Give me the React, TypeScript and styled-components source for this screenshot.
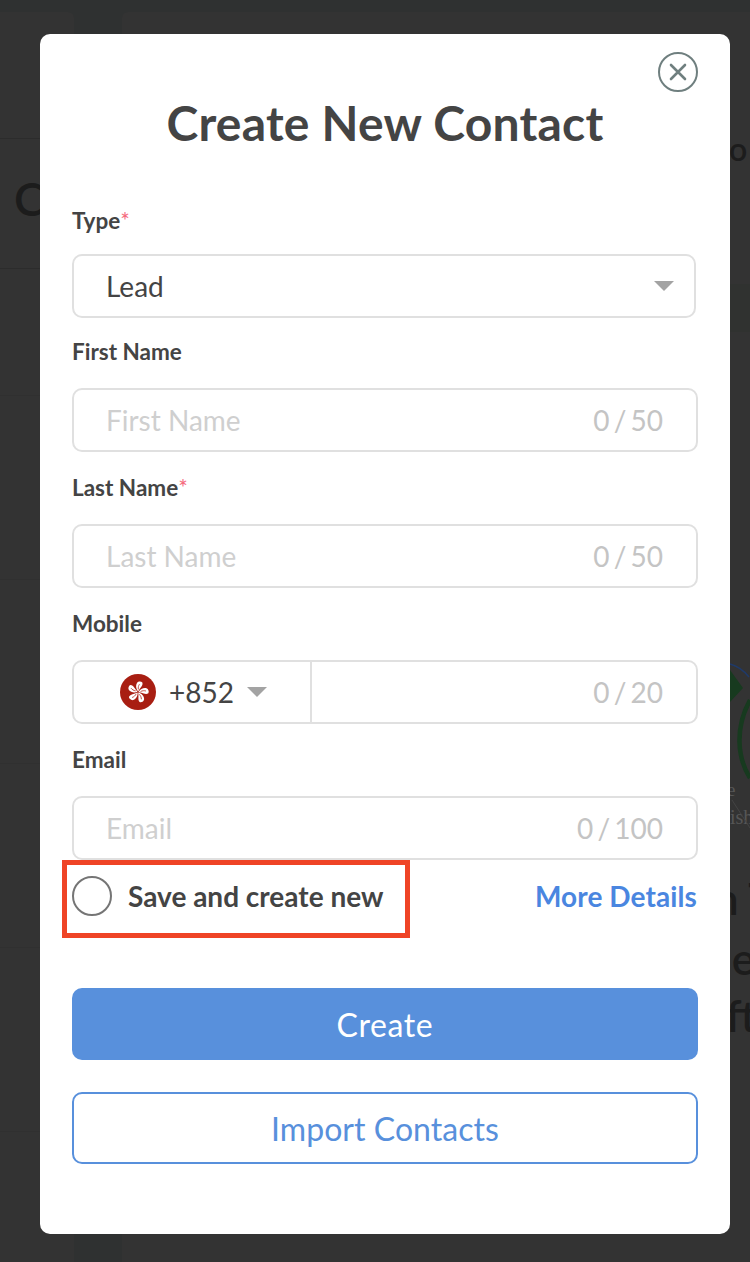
import React from "react";
import styled, { createGlobalStyle } from "styled-components";

const Global = createGlobalStyle`
  html, body { margin: 0; padding: 0; background: #333; }
  body { font-family: Lato, "Liberation Sans", sans-serif; color: #444; }
  * { box-sizing: border-box; }
`;

const Page = styled.div`
  position: relative;
  width: 750px;
  height: 1262px;
  overflow: hidden;
  background: #2f3131;
`;

const Behind = styled.div`
  position: absolute;
  inset: 12px 0 0 0;
  display: flex;
  gap: 48px;
`;

const Side = styled.div`
  width: 74px;
  background: #333333;
  border-radius: 0 6px 0 0;
`;

const Main = styled.div`
  flex: 1;
  background: #333333;
  border-radius: 6px 0 0 0;
`;

const Rule = styled.div<{ $top: number; $strong?: boolean }>`
  position: absolute;
  left: 0;
  width: 74px;
  top: ${(p) => p.$top}px;
  height: 1px;
  background: ${(p) => (p.$strong ? "#2c2c2c" : "#303030")};
`;

const Band = styled.div`
  position: absolute;
  left: 122px;
  right: 0;
  top: 284px;
  height: 48px;
  background: #303230;
`;

const Ghost = styled.span<{ $x: number; $y: number; $size: number; $serif?: boolean }>`
  position: absolute;
  left: ${(p) => p.$x}px;
  top: ${(p) => p.$y}px;
  font-size: ${(p) => p.$size}px;
  line-height: 1;
  color: ${(p) => (p.$serif ? "#565656" : "#1c1c1c")};
  font-family: ${(p) => (p.$serif ? '"Liberation Serif", serif' : "Lato, sans-serif")};
  font-weight: ${(p) => (p.$serif ? 400 : 600)};
  white-space: nowrap;
`;

const ChartArt = styled.svg`
  position: absolute;
  left: 730px;
  top: 650px;
`;

const Modal = styled.div`
  position: absolute;
  left: 40px;
  top: 34px;
  width: 690px;
  height: 1200px;
  background: #fff;
  border-radius: 10px;
  padding: 0 32px;
  display: flex;
  flex-direction: column;
`;

const Close = styled.button`
  position: absolute;
  top: 18px;
  right: 32px;
  width: 40px;
  height: 40px;
  padding: 0;
  border: 0;
  background: transparent;
  display: block;
`;

const Title = styled.h1`
  margin: 59px 0 0;
  height: 60px;
  line-height: 60px;
  font-size: 48px;
  font-weight: 700;
  letter-spacing: 0.22px;
  text-align: center;
  color: #444;
`;

const Form = styled.div`
  margin-top: 29px;
  display: flex;
  flex-direction: column;
`;

const Field = styled.div`
  display: flex;
  flex-direction: column;
`;

const Label = styled.label<{ $first?: boolean }>`
  height: 34px;
  margin: ${(p) => (p.$first ? "22px 0 16px" : "19px 0")};
  line-height: 34px;
  font-size: 22.5px;
  font-weight: 700;
  color: #444;
`;

const Star = styled.span`
  color: #f56c7e;
  font-weight: 400;
`;

const Box = styled.div<{ $select?: boolean }>`
  width: ${(p) => (p.$select ? "624px" : "626px")};
  height: 64px;
  margin-bottom: ${(p) => (p.$select ? "-2px" : "0")};
  border: 2px solid #e0e0e0;
  border-radius: 10px;
  display: flex;
  align-items: center;
  font-size: 28px;
  padding: 0 ${(p) => (p.$select ? "20px" : "33px")} 0 32px;
`;

const Value = styled.span`
  flex: 1;
  color: #444;
`;

const Placeholder = styled.span`
  flex: 1;
  color: #cfcfcf;
`;

const Counter = styled.span`
  color: #c4c4c4;
  word-spacing: -3px;
`;

const Caret = styled.span`
  width: 0;
  height: 0;
  border-left: 10px solid transparent;
  border-right: 10px solid transparent;
  border-top: 10px solid #a3a3a3;
`;

const PhoneBox = styled.div`
  width: 626px;
  height: 64px;
  border: 2px solid #e0e0e0;
  border-radius: 10px;
  display: flex;
  font-size: 28px;
`;

const Country = styled.div`
  width: 238px;
  border-right: 2px solid #e0e0e0;
  display: flex;
  align-items: center;
  padding-left: 46px;
  gap: 13px;
`;

const Dial = styled.span`
  color: #444;
`;

const PhoneNumber = styled.div`
  flex: 1;
  display: flex;
  align-items: center;
  justify-content: flex-end;
  padding-right: 33px;
`;

const Options = styled.div`
  position: relative;
  height: 40px;
  margin-top: 16px;
  display: flex;
  align-items: center;
  justify-content: space-between;
`;

const Check = styled.label`
  display: flex;
  align-items: center;
  gap: 16px;
  font-size: 28px;
  font-weight: 700;
  color: #444;
`;

const Radio = styled.span`
  width: 40px;
  height: 40px;
  border-radius: 50%;
  border: 2px solid #757575;
`;

const Highlight = styled.div`
  position: absolute;
  left: -10px;
  top: -16px;
  width: 348px;
  height: 78px;
  border: 5px solid #ef4426;
  pointer-events: none;
`;

const Details = styled.a`
  font-size: 28px;
  font-weight: 700;
  letter-spacing: 0.1px;
  margin-right: 1px;
  color: #4a86e0;
`;

const Primary = styled.button`
  margin-top: 72px;
  width: 626px;
  height: 72px;
  border: 0;
  border-radius: 10px;
  background: #5890dc;
  color: #fff;
  font: 400 32px Lato, sans-serif;
  letter-spacing: 0.6px;
`;

const Secondary = styled.button`
  margin-top: 32px;
  width: 626px;
  height: 72px;
  border: 2px solid #5890dc;
  border-radius: 10px;
  background: #fff;
  color: #5890dc;
  font: 400 32px Lato, sans-serif;
  letter-spacing: 0.05px;
`;

const HongKongFlag = () => (
  <svg width="36" height="36" viewBox="0 0 36 36">
    <circle cx="18" cy="18" r="18" fill="#a81e12" />
    {[0, 72, 144, 216, 288].map((a) => (
      <g key={a} transform={`rotate(${a + 8} 18 18)`}>
        <path
          d="M18 17.4 C15.4 15.2 14.6 11.6 15.8 9 C16.8 7.2 19.6 6.8 21 8 C21.8 9.8 21.2 11.2 20.4 12.6 C19.6 14 18.8 15.6 18 17.4 Z"
          fill="#fff"
        />
        <path d="M18 15.4 C17.4 13.4 17.6 11.6 18.4 10" stroke="#b8362b" strokeWidth="0.8" fill="none" />
      </g>
    ))}
  </svg>
);

const TextField = ({
  label,
  required,
  placeholder,
  count,
}: {
  label: string;
  required?: boolean;
  placeholder: string;
  count: string;
}) => (
  <Field>
    <Label>
      {label}
      {required && <Star>*</Star>}
    </Label>
    <Box>
      <Placeholder>{placeholder}</Placeholder>
      <Counter>{count}</Counter>
    </Box>
  </Field>
);

export default function App() {
  return (
    <Page>
      <Global />
      <Behind>
        <Side />
        <Main />
      </Behind>
      <Band />
      <Rule $top={138} $strong />
      <Rule $top={268} $strong />
      <Rule $top={395} />
      <Rule $top={579} />
      <Rule $top={763} />
      <Rule $top={947} />
      <Rule $top={1131} />
      <Ghost $x={14} $y={176} $size={46}>C</Ghost>
      <Ghost $x={729} $y={133} $size={32}>o</Ghost>
      <Ghost $x={727} $y={780} $size={19} $serif>e</Ghost>
      <Ghost $x={730} $y={807} $size={20} $serif>ish</Ghost>
      <Ghost $x={714} $y={876} $size={44}>n T</Ghost>
      <Ghost $x={707} $y={936} $size={44}>ue</Ghost>
      <Ghost $x={726} $y={993} $size={44}>ft</Ghost>
      <ChartArt width="20" height="190" viewBox="0 0 20 190">
        <path d="M0 20 L13 38 L0 52 Z" fill="#173a1f" />
        <path d="M0 14 Q11 17 19 27" stroke="#1f3a6a" strokeWidth="1.5" fill="none" />
        <path d="M20 50 Q9 70 9.5 92 Q10 112 20 128" stroke="#173a1f" strokeWidth="4.5" fill="none" />
        <path d="M2 150 L20 178" stroke="#444" strokeWidth="1" fill="none" />
      </ChartArt>
      <Modal>
        <Close aria-label="Close">
          <svg width="40" height="40" viewBox="0 0 40 40">
            <circle cx="20" cy="20" r="19" fill="none" stroke="#6f7f7f" strokeWidth="2" />
            <path d="M13 13 L27 27 M27 13 L13 27" stroke="#6f7f7f" strokeWidth="2.6" strokeLinecap="round" />
          </svg>
        </Close>
        <Title>Create New Contact</Title>
        <Form>
          <Field>
            <Label $first>
              Type<Star>*</Star>
            </Label>
            <Box $select>
              <Value>Lead</Value>
              <Caret />
            </Box>
          </Field>
          <TextField label="First Name" placeholder="First Name" count="0 / 50" />
          <TextField label="Last Name" required placeholder="Last Name" count="0 / 50" />
          <Field>
            <Label>Mobile</Label>
            <PhoneBox>
              <Country>
                <HongKongFlag />
                <Dial>+852</Dial>
                <Caret />
              </Country>
              <PhoneNumber>
                <Counter>0 / 20</Counter>
              </PhoneNumber>
            </PhoneBox>
          </Field>
          <TextField label="Email" placeholder="Email" count="0 / 100" />
        </Form>
        <Options>
          <Check>
            <Radio />
            Save and create new
          </Check>
          <Details>More Details</Details>
          <Highlight />
        </Options>
        <Primary>Create</Primary>
        <Secondary>Import Contacts</Secondary>
      </Modal>
    </Page>
  );
}
